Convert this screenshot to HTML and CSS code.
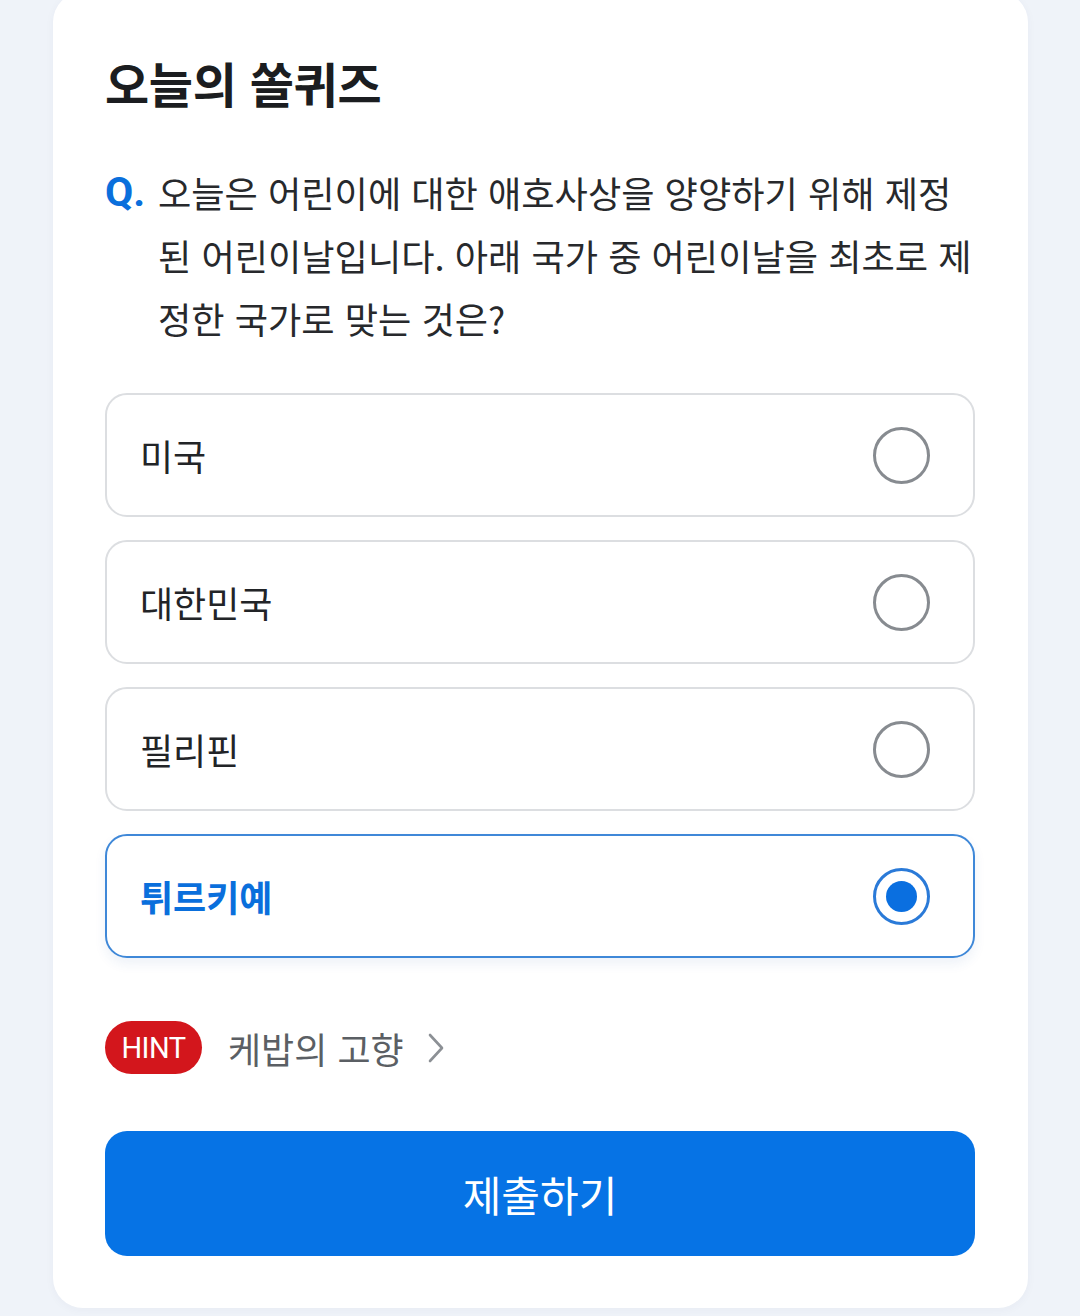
FILE: index.html
```html
<!DOCTYPE html>
<html lang="ko">
<head>
<meta charset="utf-8">
<link rel="stylesheet" href="styles.css">
</head>
<body>
<main class="card">
  <h1 class="title">오늘의 쏠퀴즈</h1>
  <div class="question">
    <span class="q-mark">Q.</span>
    <p class="q-text">오늘은 어린이에 대한 애호사상을 양양하기 위해 제정된 어린이날입니다. 아래 국가 중 어린이날을 최초로 제정한 국가로 맞는 것은?</p>
  </div>
  <ul class="options">
    <li class="option"><span class="opt-label">미국</span><span class="radio"></span></li>
    <li class="option"><span class="opt-label">대한민국</span><span class="radio"></span></li>
    <li class="option"><span class="opt-label">필리핀</span><span class="radio"></span></li>
    <li class="option selected"><span class="opt-label">튀르키예</span><span class="radio"><span class="dot"></span></span></li>
  </ul>
  <div class="hint">
    <span class="hint-badge">HINT</span>
    <span class="hint-text">케밥의 고향</span>
    <svg class="chev" width="18" height="32" viewBox="0 0 18 32"><polyline points="3,3 15,16 3,29" fill="none" stroke="#8c9095" stroke-width="2.6" stroke-linecap="round" stroke-linejoin="round"/></svg>
  </div>
  <button class="submit">제출하기</button>
</main>
</body>
</html>
```

FILE: styles.css
```css
html, body {
  margin: 0;
  padding: 0;
}
body {
  background: #eff3f9;
  font-family: "Noto Sans CJK KR", "Noto Sans", sans-serif;
  height: 1316px;
  overflow: hidden;
}
.card {
  box-sizing: border-box;
  width: 975px;
  margin: -8px 0 0 53px;
  padding: 60px 53px 52px 52px;
  background: #ffffff;
  border-radius: 30px;
  box-shadow: 0 2px 10px rgba(40, 60, 100, 0.04);
}
.title {
  margin: 0;
  font-size: 48px;
  line-height: 60px;
  font-weight: 700;
  color: #1b1d20;
  letter-spacing: -0.3px;
}
.question {
  display: flex;
  margin-top: 49px;
}
.q-mark {
  flex: 0 0 53px;
  font-family: "Roboto", "Noto Sans", sans-serif;
  font-weight: 700;
  font-size: 41px;
  line-height: 63px;
  color: #0a6fdc;
}
.q-text {
  margin: 0;
  width: 817px;
  font-size: 36.2px;
  line-height: 63px;
  color: #27292c;
}
.options {
  list-style: none;
  margin: 43px 0 0;
  padding: 0;
  display: flex;
  flex-direction: column;
  gap: 23px;
}
.option {
  box-sizing: border-box;
  height: 124px;
  border: 2px solid #dcdee1;
  border-radius: 22px;
  display: flex;
  align-items: center;
  justify-content: space-between;
  padding: 0 43px 0 33px;
}
.opt-label {
  font-size: 36px;
  color: #222427;
  line-height: 1;
}
.radio {
  box-sizing: border-box;
  width: 57px;
  height: 57px;
  border-radius: 50%;
  border: 3px solid #878b90;
  display: flex;
  align-items: center;
  justify-content: center;
}
.option.selected {
  border-color: #3f88d8;
  box-shadow: 0 6px 12px rgba(40, 90, 160, 0.08);
}
.option.selected .opt-label {
  color: #0a6fdc;
  font-weight: 700;
}
.option.selected .radio {
  border-color: #2a7ad8;
}
.dot {
  width: 31px;
  height: 31px;
  border-radius: 50%;
  background: #0a6fe0;
}
.hint {
  display: flex;
  align-items: center;
  margin-top: 63px;
  height: 53px;
}
.hint-badge {
  box-sizing: border-box;
  width: 97px;
  height: 53px;
  border-radius: 27px;
  background: #d3161c;
  color: #ffffff;
  font-family: "Roboto", "Noto Sans", sans-serif;
  font-size: 29px;
  display: flex;
  align-items: center;
  justify-content: center;
  letter-spacing: -0.5px;
}
.hint-text {
  margin-left: 26px;
  font-size: 36px;
  color: #5b5f64;
}
.chev {
  margin-left: 23px;
}
.submit {
  display: block;
  width: 100%;
  height: 125px;
  margin-top: 57px;
  border: none;
  border-radius: 22px;
  background: #0673e5;
  color: #ffffff;
  font-family: "Noto Sans CJK KR", "Noto Sans", sans-serif;
  font-size: 42px;
  padding: 0;
}
```
